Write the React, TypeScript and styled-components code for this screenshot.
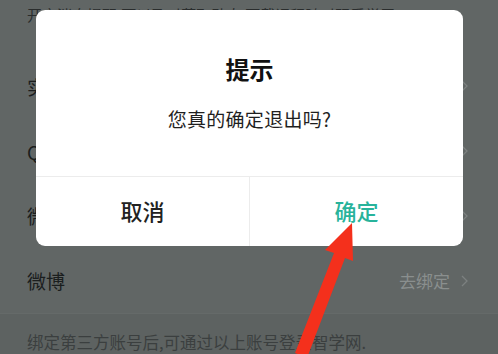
import React from "react";
import styled, { createGlobalStyle } from "styled-components";

const Global = createGlobalStyle`
  html, body { margin: 0; padding: 0; }
  body {
    width: 498px;
    height: 354px;
    overflow: hidden;
    font-family: "Noto Sans CJK SC", "Noto Sans", sans-serif;
  }
`;

const Page = styled.div`
  position: relative;
  width: 498px;
  height: 354px;
  overflow: hidden;
  background: #616665;
  display: flex;
  flex-direction: column;
`;

const Notice = styled.div`
  height: 54px;
  padding: 3px 27px 0;
  box-sizing: border-box;
  font-size: 15px;
  line-height: 24px;
  color: #2a2d2d;
  white-space: nowrap;
  overflow: hidden;
`;

const Row = styled.div`
  height: 65px;
  display: flex;
  align-items: center;
  padding: 0 30px 0 27px;
  box-sizing: border-box;
`;

const Label = styled.span`
  flex: 1;
  font-size: 19px;
  color: #1b1e1e;
`;

const Action = styled.span`
  font-size: 17px;
  color: #8a8f8e;
  display: flex;
  align-items: center;
  gap: 11px;
`;

const Footer = styled.div`
  flex: 1;
  background: #5d6261;
  border-top: 1px solid #656a69;
  padding: 16px 27px 0;
  font-size: 16.5px;
  color: #3b3f3f;
  white-space: nowrap;
`;

const Overlay = styled.div`
  position: absolute;
  inset: 0;
  padding: 10px 35px 0 36px;
`;

const Dialog = styled.div`
  width: 427px;
  height: 236px;
  background: #ffffff;
  border-radius: 9px;
  display: flex;
  flex-direction: column;
  overflow: hidden;
`;

const Body = styled.div`
  height: 166px;
  display: flex;
  flex-direction: column;
  align-items: center;
  border-bottom: 1px solid #ececec;
`;

const Title = styled.div`
  margin-top: 43px;
  font-size: 24px;
  line-height: 32px;
  font-weight: 700;
  color: #111;
`;

const Message = styled.div`
  margin-top: 21px;
  font-size: 19px;
  line-height: 26px;
  color: #1f1f1f;
  letter-spacing: 0.3px;
`;

const Buttons = styled.div`
  flex: 1;
  display: flex;
`;

const Btn = styled.div<{ $primary?: boolean }>`
  flex: 1;
  display: flex;
  align-items: center;
  justify-content: center;
  padding-bottom: 3px;
  font-size: 22px;
  font-weight: 500;
  color: ${(p) => (p.$primary ? "#28b39b" : "#222")};
  & + & {
    border-left: 1px solid #ececec;
  }
`;

const Arrow = styled.svg`
  position: absolute;
  left: 0;
  top: 0;
  pointer-events: none;
`;

const Chevron = () => (
  <svg width="7" height="12" viewBox="0 0 7 12">
    <path d="M1 1l5 5-5 5" fill="none" stroke="#7c8180" strokeWidth="1.3" />
  </svg>
);

const rows = [
  { label: "实名认证", action: "已认证" },
  { label: "QQ", action: "去绑定" },
  { label: "微信", action: "去绑定" },
  { label: "微博", action: "去绑定" },
];

export default function App() {
  return (
    <>
      <Global />
      <Page>
        <Notice>开启消息提醒,可以及时获取动态,下载课程随时观看学习</Notice>
        {rows.map((r) => (
          <Row key={r.label}>
            <Label>{r.label}</Label>
            <Action>
              {r.action}
              <Chevron />
            </Action>
          </Row>
        ))}
        <Footer>绑定第三方账号后,可通过以上账号登录智学网.</Footer>
        <Overlay>
          <Dialog>
            <Body>
              <Title>提示</Title>
              <Message>您真的确定退出吗?</Message>
            </Body>
            <Buttons>
              <Btn>取消</Btn>
              <Btn $primary>确定</Btn>
            </Buttons>
          </Dialog>
        </Overlay>
        <Arrow width="498" height="354" viewBox="0 0 498 354">
          <polygon
            points="352,223 353,261 345,258 307,358 295,353 334,253 325,250"
            fill="#f4301c"
          />
        </Arrow>
      </Page>
    </>
  );
}
